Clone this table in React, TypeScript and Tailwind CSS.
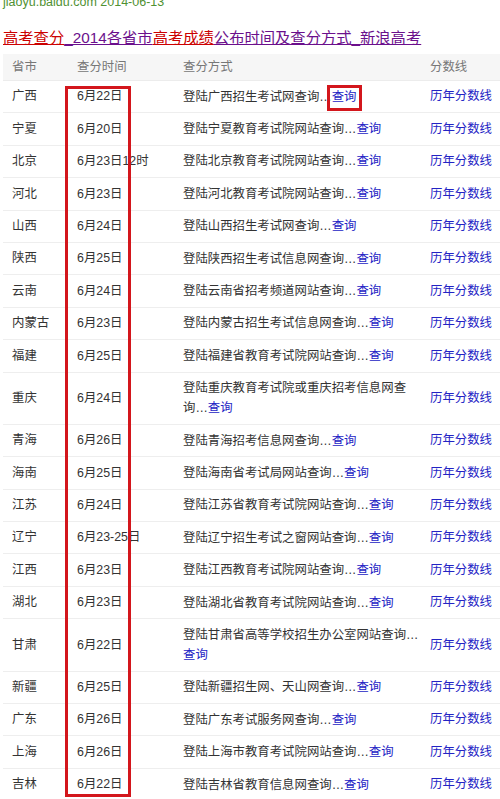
const rows: { city: string; date: string; lines: string[] }[] = [
  { city: '广西', date: '6月22日', lines: ['登陆广西招生考试网查询'] },
  { city: '宁夏', date: '6月20日', lines: ['登陆宁夏教育考试院网站查询'] },
  { city: '北京', date: '6月23日12时', lines: ['登陆北京教育考试院网站查询'] },
  { city: '河北', date: '6月23日', lines: ['登陆河北教育考试院网站查询'] },
  { city: '山西', date: '6月24日', lines: ['登陆山西招生考试网查询'] },
  { city: '陕西', date: '6月25日', lines: ['登陆陕西招生考试信息网查询'] },
  { city: '云南', date: '6月24日', lines: ['登陆云南省招考频道网站查询'] },
  { city: '内蒙古', date: '6月23日', lines: ['登陆内蒙古招生考试信息网查询'] },
  { city: '福建', date: '6月25日', lines: ['登陆福建省教育考试院网站查询'] },
  { city: '重庆', date: '6月24日', lines: ['登陆重庆教育考试院或重庆招考信息网查', '询'] },
  { city: '青海', date: '6月26日', lines: ['登陆青海招考信息网查询'] },
  { city: '海南', date: '6月25日', lines: ['登陆海南省考试局网站查询'] },
  { city: '江苏', date: '6月24日', lines: ['登陆江苏省教育考试院网站查询'] },
  { city: '辽宁', date: '6月23-25日', lines: ['登陆辽宁招生考试之窗网站查询'] },
  { city: '江西', date: '6月23日', lines: ['登陆江西教育考试院网站查询'] },
  { city: '湖北', date: '6月23日', lines: ['登陆湖北省教育考试院网站查询'] },
  { city: '甘肃', date: '6月22日', lines: ['登陆甘肃省高等学校招生办公室网站查询…', ''] },
  { city: '新疆', date: '6月25日', lines: ['登陆新疆招生网、天山网查询'] },
  { city: '广东', date: '6月26日', lines: ['登陆广东考试服务网查询'] },
  { city: '上海', date: '6月26日', lines: ['登陆上海市教育考试院网站查询'] },
  { city: '吉林', date: '6月22日', lines: ['登陆吉林省教育信息网查询'] },
]

function Method({ lines }: { lines: string[] }) {
  const last = lines[lines.length - 1]
  return (
    <div className="leading-[20px] whitespace-nowrap">
      { lines.slice(0, -1).map((l, i) => <div key={ i }>{ l }</div>) }
      <div>
        { last !== '' && `${ last }…` }
        <a className="text-[#2323c4] cursor-pointer">查询</a>
      </div>
    </div>
  )
}

export default function App() {
  return (
    <main className="relative w-[500px] h-[799px] overflow-hidden bg-white font-['Liberation_Sans','Noto_Sans_CJK_SC',sans-serif]">
      <p className="-mt-[5px] pl-[3px] text-[12.5px] leading-[15px] text-[#4f9132]">jiaoyu.baidu.com 2014-06-13</p>

      <h1 className="mt-[18px] pl-[3px] text-[15.3px] leading-[20px] whitespace-nowrap">
        <span className="text-[#cc0000] underline">高考查分</span>
        <span className="text-[#6b0f8c] underline">_2014各省市</span>
        <span className="text-[#cc0000] underline">高考成绩</span>
        <span className="text-[#6b0f8c] underline">公布时间及查分方式_新浪高考</span>
      </h1>

      <section className="mt-[6px] ml-[3px] text-[12.4px] text-[#333]">
        <div className="flex items-center h-[27px] bg-[#f6f6f6] border-b border-[#ececec] text-[#777] leading-[20px]">
          <div className="w-[74px] pl-[9px]">省市</div>
          <div className="w-[106px]">查分时间</div>
          <div className="w-[247px]">查分方式</div>
          <div>分数线</div>
        </div>

        { rows.map(row =>
          <div key={ row.city } className={ `flex items-center border-b border-[#eeeeee] ${ row.lines.length > 1 ? 'h-[52.4px]' : 'h-[32.4px]' }` }>
            <div className="w-[74px] pl-[9px]">{ row.city }</div>
            <div className="w-[106px] whitespace-nowrap">{ row.date }</div>
            <div className="w-[247px]"><Method lines={ row.lines } /></div>
            <a className="text-[#2323c4] cursor-pointer whitespace-nowrap">历年分数线</a>
          </div>
        ) }
      </section>

      <div className="absolute left-[65px] top-[86px] w-[66px] h-[711px] border-[3px] border-[#d3161c]" />
      <div className="absolute left-[327px] top-[85px] w-[35px] h-[26px] border-[3px] border-[#d3161c]" />
    </main>
  )
}
